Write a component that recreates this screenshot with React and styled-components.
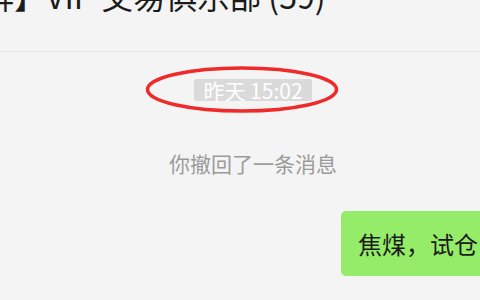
import React from "react";
import styled, { createGlobalStyle } from "styled-components";

const GlobalStyle = createGlobalStyle`
  html, body {
    margin: 0;
    padding: 0;
    background: #f4f4f4;
    overflow: hidden;
  }
  body {
    font-family: "Noto Sans CJK SC", "Noto Sans", sans-serif;
  }
`;

const Page = styled.div`
  position: relative;
  width: 506px;
  height: 300px;
  background: #f4f4f4;
  display: flex;
  flex-direction: column;
`;

const Header = styled.header`
  height: 51px;
  border-bottom: 1px solid #e3e3e3;
  overflow: hidden;
  flex-shrink: 0;
`;

const Title = styled.h1`
  margin: -21px 0 0 -18px;
  font-size: 32px;
  line-height: 32px;
  font-weight: 400;
  color: #1b1b1b;
  white-space: nowrap;
`;

const Chat = styled.main`
  display: flex;
  flex-direction: column;
  align-items: center;
  padding-top: 27px;
`;

const TimeBadge = styled.span`
  display: inline-block;
  height: 22px;
  line-height: 22px;
  padding: 0 9px;
  font-size: 21px;
  color: #ffffff;
  background: #dadada;
  border-radius: 2px;
`;

const SystemNote = styled.div`
  margin-top: 48px;
  font-size: 21px;
  line-height: 28px;
  color: #9b9b9b;
`;

const MessageRow = styled.div`
  align-self: stretch;
  display: flex;
  justify-content: flex-end;
  padding-right: 11px;
  margin-top: 34px;
`;

const Bubble = styled.div`
  background: #95ec69;
  border-radius: 5px;
  padding: 20px 17px;
  font-size: 24px;
  line-height: 25px;
  color: #1b1b1b;
  white-space: nowrap;
`;

const Annotation = styled.svg`
  position: absolute;
  left: 145px;
  top: 66px;
  pointer-events: none;
`;

export default function App() {
  return (
    <>
      <GlobalStyle />
      <Page>
        <Header>
          <Title>群】VIP 交易俱乐部 (59)</Title>
        </Header>
        <Chat>
          <TimeBadge>昨天 15:02</TimeBadge>
          <SystemNote>你撤回了一条消息</SystemNote>
          <MessageRow>
            <Bubble>焦煤，试仓</Bubble>
          </MessageRow>
        </Chat>
        <Annotation width="196" height="48" viewBox="0 0 196 48">
          <ellipse cx="97" cy="23.5" rx="94.5" ry="21.5" fill="none" stroke="#ef2a2a" strokeWidth="3.5" />
        </Annotation>
      </Page>
    </>
  );
}
